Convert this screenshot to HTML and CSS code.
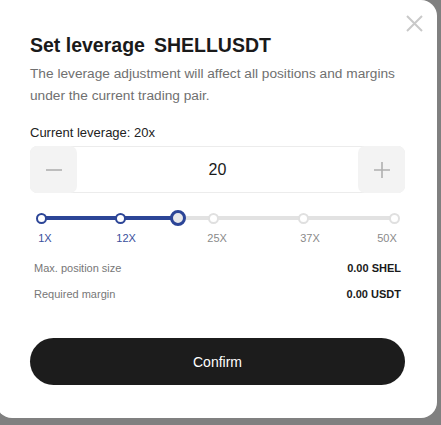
FILE: index.html
```html
<!DOCTYPE html>
<html lang="en">
<head>
<meta charset="utf-8">
<title>Set leverage</title>
<link rel="stylesheet" href="styles.css">
</head>
<body>
<div class="modal">
  <button class="close" aria-label="Close">
    <svg width="17" height="17" viewBox="0 0 17 17"><path d="M1 1L16 16M16 1L1 16" stroke="#c9c9c9" stroke-width="2" fill="none"/></svg>
  </button>
  <h1 class="title"><span>Set leverage</span><span class="pair">SHELLUSDT</span></h1>
  <p class="desc">The leverage adjustment will affect all positions and margins under the current trading pair.</p>
  <div class="current">Current leverage: 20x</div>
  <div class="stepper">
    <button class="step-btn" aria-label="Decrease">
      <svg width="18" height="18" viewBox="0 0 18 18"><path d="M1 9H17" stroke="#b0b0b0" stroke-width="1.6"/></svg>
    </button>
    <div class="value">20</div>
    <button class="step-btn" aria-label="Increase">
      <svg width="18" height="18" viewBox="0 0 18 18"><path d="M1 9H17M9 1V17" stroke="#b0b0b0" stroke-width="1.6"/></svg>
    </button>
  </div>
  <div class="slider">
    <div class="track">
      <div class="fill" style="width: 38.8%"></div>
      <span class="dot on" style="left: 0%"></span>
      <span class="dot on" style="left: 22.4%"></span>
      <span class="dot" style="left: 49%"></span>
      <span class="dot" style="left: 74.5%"></span>
      <span class="dot" style="left: 100%"></span>
      <span class="thumb" style="left: 38.8%"></span>
    </div>
    <div class="marks">
      <span class="mark on" style="left: 1.1%">1X</span>
      <span class="mark on" style="left: 24.1%">12X</span>
      <span class="mark" style="left: 49.9%">25X</span>
      <span class="mark" style="left: 76.2%">37X</span>
      <span class="mark" style="left: 98%">50X</span>
    </div>
  </div>
  <div class="info">
    <div class="row"><span class="label">Max. position size</span><span class="val">0.00 SHEL</span></div>
    <div class="row"><span class="label">Required margin</span><span class="val">0.00 USDT</span></div>
  </div>
  <button class="confirm">Confirm</button>
</div>
</body>
</html>
```
FILE: styles.css
```css
* { box-sizing: border-box; }
html, body { margin: 0; padding: 0; }
body {
  background: #808080;
  width: 441px;
  height: 425px;
  overflow: hidden;
  font-family: "Liberation Sans", Arial, sans-serif;
}
.modal {
  position: relative;
  margin-left: -4px;
  width: 441px;
  height: 418px;
  background: #fff;
  border-radius: 0 16px 16px 16px;
  padding: 32px 32px 0 34px;
}
.close {
  position: absolute;
  top: 15px;
  right: 14px;
  width: 17px;
  height: 17px;
  padding: 0;
  border: 0;
  background: none;
  display: flex;
}
.title {
  margin: 0;
  font-size: 19.5px;
  font-weight: 700;
  color: #1a1a1a;
  line-height: 26px;
  display: flex;
  gap: 9px;
}
.desc {
  margin: 5px 0 0;
  font-size: 13.7px;
  line-height: 22px;
  color: #707070;
}
.current {
  margin-top: 17px;
  font-size: 13px;
  line-height: 18px;
  color: #222;
}
.stepper {
  margin-top: 4px;
  height: 47px;
  border: 1px solid #ececec;
  border-radius: 7px;
  display: flex;
  align-items: stretch;
}
.step-btn {
  width: 47px;
  margin: -1px;
  border: 0;
  border-radius: 7px;
  background: #f3f3f3;
  display: flex;
  align-items: center;
  justify-content: center;
  padding: 0;
}
.value {
  flex: 1;
  display: flex;
  align-items: center;
  justify-content: center;
  font-size: 16px;
  color: #1a1a1a;
}
.slider {
  margin: 23px 11px 0 11px;
}
.track {
  position: relative;
  height: 4px;
  background: #e2e2e2;
  border-radius: 2px;
}
.fill {
  height: 4px;
  background: #2c4597;
  border-radius: 2px;
}
.dot {
  position: absolute;
  top: 50%;
  width: 11px;
  height: 11px;
  margin: -5.5px 0 0 -5.5px;
  border-radius: 50%;
  background: #fff;
  border: 2px solid #e0e0e0;
}
.dot.on { border: 2.5px solid #2c4597; }
.thumb {
  position: absolute;
  top: 50%;
  width: 16px;
  height: 16px;
  margin: -8px 0 0 -8px;
  border-radius: 50%;
  background: #e8e8ea;
  border: 3.5px solid #2c4597;
}
.marks {
  position: relative;
  height: 16px;
  margin-top: 12px;
}
.mark {
  position: absolute;
  top: 0;
  transform: translateX(-50%);
  font-size: 11px;
  color: #8a8a8a;
  white-space: nowrap;
}
.mark.on { color: #3a4f9c; }
.info {
  margin-top: 13px;
  display: flex;
  flex-direction: column;
  gap: 12px;
}
.row {
  display: flex;
  justify-content: space-between;
  align-items: center;
  padding: 0 4px 0 4px;
  height: 14px;
  font-size: 11px;
}
.label { color: #777; }
.val { color: #1a1a1a; font-weight: 700; }
.confirm {
  display: block;
  margin-top: 37px;
  width: 100%;
  height: 47px;
  border: 0;
  border-radius: 24px;
  background: #1c1c1c;
  color: #fff;
  font-family: inherit;
  font-size: 14px;
}
```
